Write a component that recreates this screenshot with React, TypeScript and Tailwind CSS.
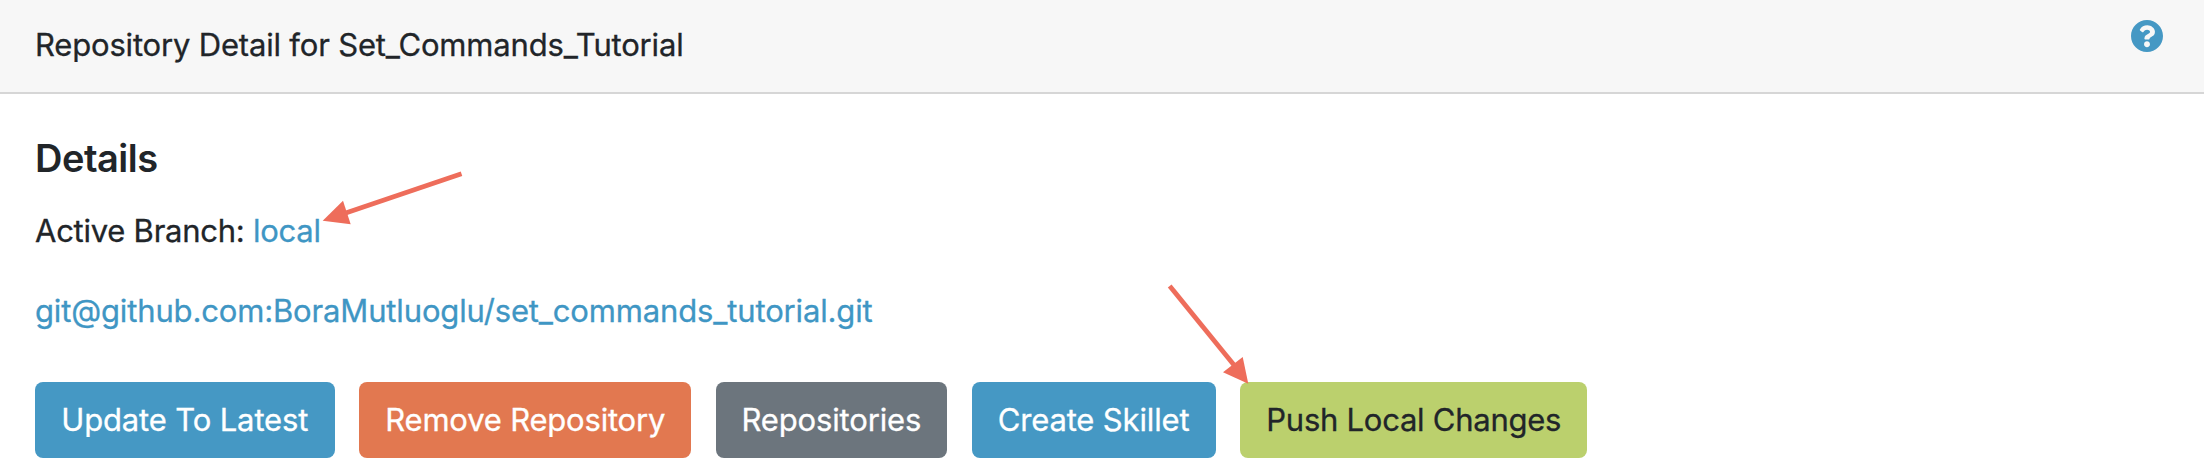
const buttons = [
  { label: "Update To Latest", cls: "w-[299.5px] bg-[#4598c4] text-white" },
  { label: "Remove Repository", cls: "w-[332px] bg-[#e27850] text-white tracking-[-0.2px]" },
  { label: "Repositories", cls: "w-[231px] bg-[#6c757d] text-white" },
  { label: "Create Skillet", cls: "w-[244px] bg-[#4598c4] text-white" },
  { label: "Push Local Changes", cls: "w-[347px] bg-[#bbd06d] text-[#212529] tracking-[-0.25px]" },
];

export default function App() {
  return (
    <div className="relative h-[472px] w-[2204px] overflow-hidden bg-white font-['Inter',sans-serif] text-[31px] leading-[48px] tracking-[-0.15px] text-[#212529] [-webkit-text-stroke:0.3px]">
      <header className="flex h-[94px] items-start justify-between border-b-2 border-[#d6d6d6] bg-[#f7f7f7] pt-5 pr-[41px] pl-[35px]">
        <span className="pt-px tracking-[-0.18px]">Repository Detail for Set_Commands_Tutorial</span>
        <svg viewBox="8 8 496 496" className="h-8 w-8" fill="#4598c4">
          <path d="M504 256c0 137-111 248-248 248S8 393 8 256C8 119.083 119 8 256 8s248 111.083 248 248zM262.655 90c-54.497 0-89.255 22.957-116.549 63.758-3.536 5.286-2.353 12.415 2.715 16.258l34.699 26.31c5.205 3.947 12.621 3.008 16.665-2.122 17.864-22.658 30.113-35.797 57.303-35.797 20.429 0 45.698 13.148 45.698 32.958 0 14.976-12.363 22.667-32.534 33.976C247.128 238.528 216 254.941 216 296v4c0 6.627 5.373 12 12 12h56c6.627 0 12-5.373 12-12v-1.333c0-28.462 83.186-29.647 83.186-106.667 0-58.002-60.165-102-116.531-102zM256 338c-25.365 0-46 20.635-46 46 0 25.364 20.635 46 46 46s46-20.636 46-46c0-25.365-20.635-46-46-46z" />
        </svg>
      </header>
      <main className="flex flex-col items-start pl-[35px]">
        <h2 className="mt-10 text-[38px] font-semibold tracking-[-0.5px] [-webkit-text-stroke:0px]">Details</h2>
        <p className="mt-[25px] tracking-[-0.25px] whitespace-pre">Active Branch: <span className="text-[#3f96c4]">local</span></p>
        <a className="mt-8 text-[#3f96c4]">git@github.com:BoraMutluoglu/set_commands_tutorial.git</a>
        <div className="mt-[47px] flex gap-[24.7px]">
          {buttons.map((b) => (
            <button key={b.label} className={`h-[76px] rounded-lg whitespace-nowrap ${b.cls}`}>
              {b.label}
            </button>
          ))}
        </div>
      </main>
      <svg viewBox="0 0 142 56" className="absolute top-[171px] left-[322px] h-14 w-[142px]" fill="#ee6d5b">
        <path d="M0.7 49.8L21 29.8L28.7 53.3Z" />
        <path d="M20 43.2L139.5 2.8" stroke="#ee6d5b" strokeWidth="4.8" />
      </svg>
      <svg viewBox="0 0 84 102" className="absolute top-[283px] left-[1166px] h-[102px] w-[84px]" fill="#ee6d5b">
        <path d="M82.3 100.7L76.7 74L57 89.3Z" />
        <path d="M3.7 3L70 84.5" stroke="#ee6d5b" strokeWidth="4.8" />
      </svg>
    </div>
  );
}
